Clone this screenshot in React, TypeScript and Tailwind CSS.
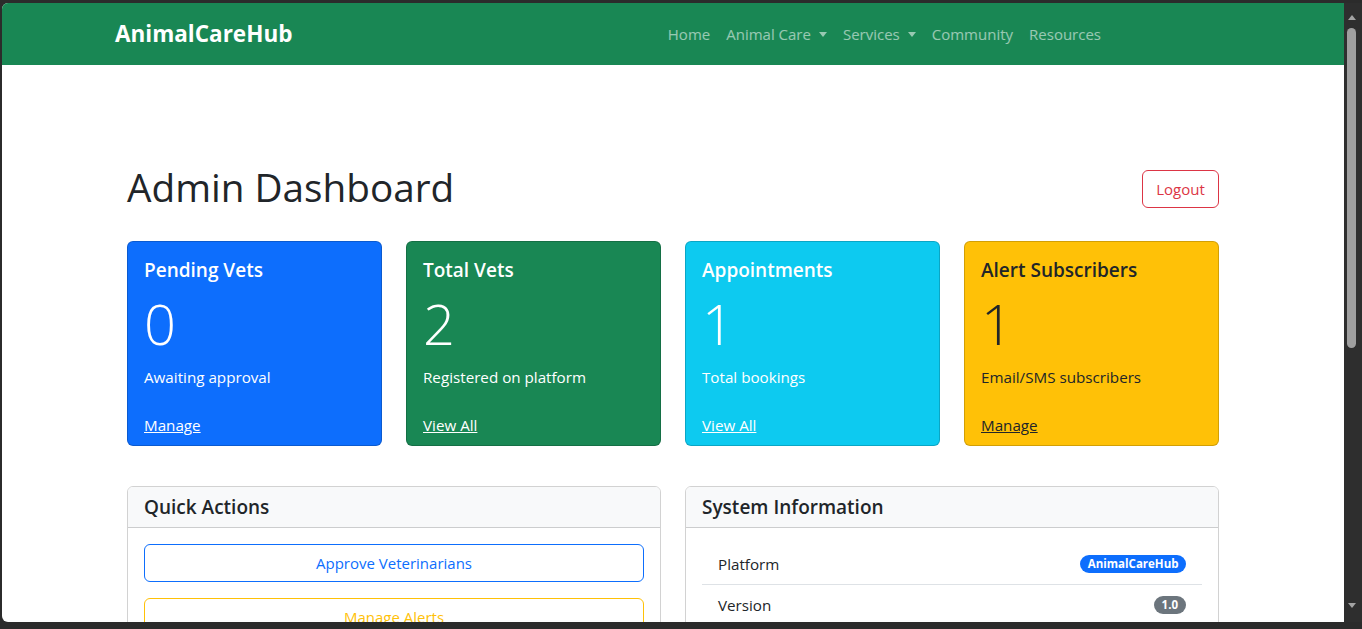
import React from "react";

const stats = [
  { title: "Pending Vets", value: "0", note: "Awaiting approval", link: "Manage", bg: "bg-[#0d6efd]", text: "text-white" },
  { title: "Total Vets", value: "2", note: "Registered on platform", link: "View All", bg: "bg-[#198754]", text: "text-white" },
  { title: "Appointments", value: "1", note: "Total bookings", link: "View All", bg: "bg-[#0dcaf0]", text: "text-white" },
  { title: "Alert Subscribers", value: "1", note: "Email/SMS subscribers", link: "Manage", bg: "bg-[#ffc107]", text: "text-[#212529]" },
];

const navLinks = [
  { label: "Home", caret: false },
  { label: "Animal Care", caret: true },
  { label: "Services", caret: true },
  { label: "Community", caret: false },
  { label: "Resources", caret: false },
];

const Navbar = () => (
  <nav className="h-[62px] bg-[#198754] shrink-0">
    <div className="w-[1140px] mx-auto px-3 h-full flex items-center">
      <a className="text-[22.5px] font-bold text-white leading-[30px]">AnimalCareHub</a>
      <ul className="flex items-center ml-auto mr-[122px]">
        {navLinks.map((l) => (
          <li key={l.label}>
            <a className="flex items-center px-2 text-[15px] leading-6 text-white/55">
              {l.label}
              {l.caret && (
                <span className="ml-[8px] w-0 h-0 border-t-[5px] border-t-white/55 border-x-[4.5px] border-x-transparent" />
              )}
            </a>
          </li>
        ))}
      </ul>
    </div>
  </nav>
);

const StatCard = ({ s }: { s: (typeof stats)[number] }) => (
  <div className={`${s.bg} ${s.text} rounded-[6px] border border-black/[.175] px-4 pt-4 pb-2`}>
    <h5 className="text-[19px] leading-6 font-semibold mb-2">{s.title}</h5>
    <div className="text-[56px] leading-[67px] font-light mb-2">{s.value}</div>
    <p className="text-[15.2px] leading-6">{s.note}</p>
    <a className="block mt-6 text-[15.2px] leading-6 underline">{s.link}</a>
  </div>
);

const Dashboard = () => (
  <main className="w-[1092px] mx-auto pt-[96px]">
    {/* Title row */}
    <div className="flex items-center justify-between h-[56px] mb-6">
      <h1 className="text-[38.7px] leading-[48px] font-medium text-[#212529] self-start pt-[2px]">Admin Dashboard</h1>
      <button className="h-[38px] w-[77px] rounded-[6px] border border-[#dc3545] text-[#dc3545] text-[15px]">
        Logout
      </button>
    </div>

    {/* Stats */}
    <div className="grid grid-cols-4 gap-6">
      {stats.map((s) => (
        <StatCard key={s.title} s={s} />
      ))}
    </div>

    {/* Lower panels */}
    <div className="grid grid-cols-2 gap-6 mt-10">
      <div className="rounded-[6px] border border-black/[.175] overflow-hidden">
        <div className="px-4 py-2 bg-[#f8f9fa] border-b border-black/[.175] text-[19px] leading-6 font-semibold text-[#212529]">
          Quick Actions
        </div>
        <div className="p-4 flex flex-col gap-4">
          <button className="h-[38px] w-full rounded-[6px] border border-[#0d6efd] text-[#0d6efd] text-[15px]">
            Approve Veterinarians
          </button>
          <button className="h-[38px] w-full rounded-[6px] border border-[#ffc107] text-[#ffc107] text-[15px]">
            Manage Alerts
          </button>
        </div>
      </div>

      <div className="rounded-[6px] border border-black/[.175] overflow-hidden">
        <div className="px-4 py-2 bg-[#f8f9fa] border-b border-black/[.175] text-[19px] leading-6 font-semibold text-[#212529]">
          System Information
        </div>
        <div className="p-4">
          <ul className="text-[15.2px] text-[#212529]">
            <li className="flex items-center justify-between px-4 py-2 leading-6 border-b border-[#dee2e6]">
              Platform
              <span className="rounded-full bg-[#0d6efd] text-white text-[11.5px] font-bold leading-none px-[7.5px] py-[3.5px]">
                AnimalCareHub
              </span>
            </li>
            <li className="flex items-center justify-between px-4 py-2 leading-6">
              Version
              <span className="rounded-full bg-[#6c757d] text-white text-[11.5px] font-bold leading-none px-[8px] py-[3.5px]">
                1.0
              </span>
            </li>
          </ul>
        </div>
      </div>
    </div>
  </main>
);

const Scrollbar = () => (
  <div className="w-[18px] h-full bg-[#2e2e2e] flex flex-col items-center pt-[12px] pr-[3px] pb-[14px]">
    <span className="w-0 h-0 border-b-[5px] border-b-[#a3a3a3] border-x-[4px] border-x-transparent" />
    <div className="mt-[8px] w-[9px] h-[320px] rounded-[5px] bg-[#9f9f9f]" />
    <span className="mt-auto w-0 h-0 border-t-[5px] border-t-[#a3a3a3] border-x-[4px] border-x-transparent" />
  </div>
);

export default function App() {
  return (
    <div
      className="w-[1362px] h-[629px] bg-[#2b2b2b] overflow-hidden flex flex-col pt-[3px] pl-[2px]"
      style={{ fontFamily: '"Open Sans", "Noto Sans", sans-serif' }}
    >
      <div className="flex h-[619px]">
        <div className="w-[1342px] h-full bg-white rounded-tl-[6px] rounded-bl-[6px] overflow-hidden flex flex-col">
          <Navbar />
          <Dashboard />
        </div>
        <Scrollbar />
      </div>
    </div>
  );
}
